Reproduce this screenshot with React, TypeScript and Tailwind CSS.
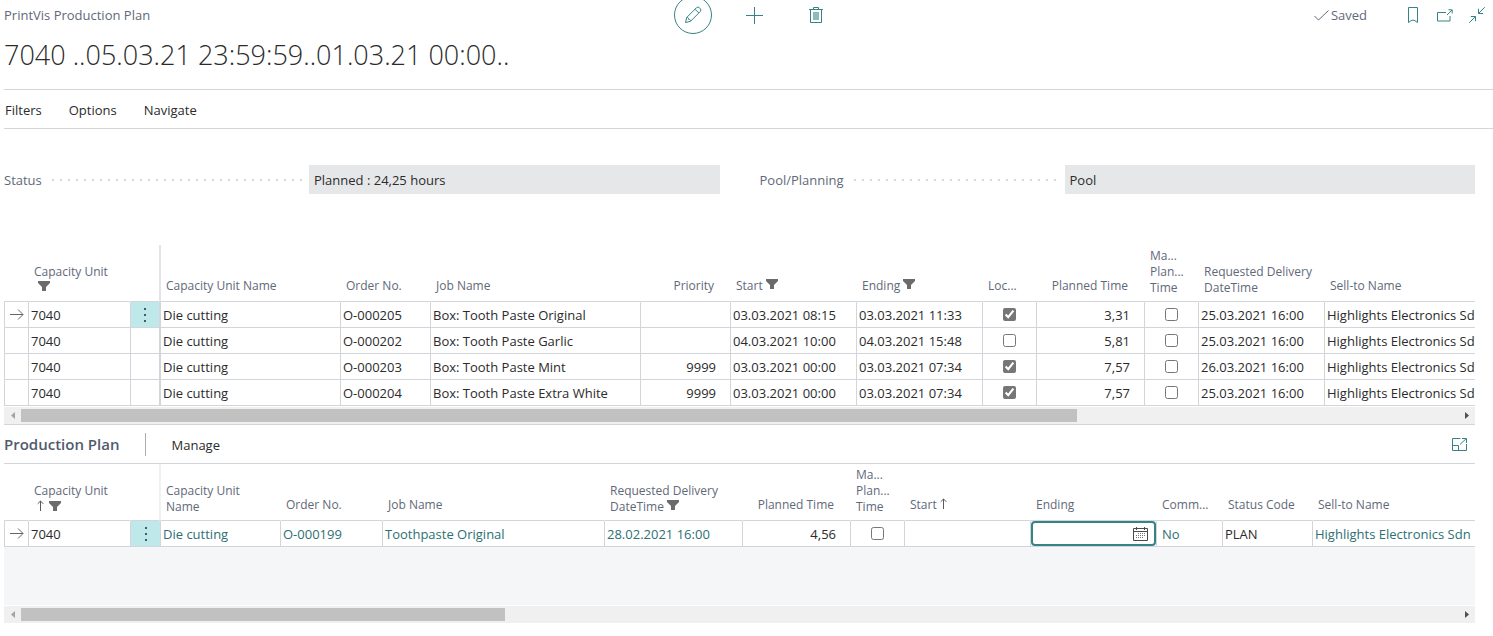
import type { ReactNode } from "react";

type Align = "left" | "right" | "center";

interface Column {
  label: ReactNode;
  lines?: boolean;
  align?: Align;
  width: string;
}

function FilterIcon() {
  return (
    <svg aria-hidden="true" className="inline-block h-[10px] w-3 align-[1px]" viewBox="0 0 12 10" fill="#6b6b6b">
      <path d="M0 0h12v2L8 6v4H4V6L0 2z" />
    </svg>
  );
}

function SortIcon() {
  return (
    <svg aria-hidden="true" className="inline-block h-[11px] w-[7px] align-baseline" viewBox="0 0 7 11" fill="none" stroke="#5a5a5a">
      <path d="M3.5 11V1M.7 3.8l2.8-2.8 2.8 2.8" />
    </svg>
  );
}

function RowArrow() {
  return (
    <svg aria-hidden="true" className="mx-auto h-[13px] w-[14px]" viewBox="0 0 14 13" fill="none" stroke="#666">
      <path d="M0 6.5h13M8 1.5l5 5-5 5" />
    </svg>
  );
}

function RowMenu() {
  return (
    <button type="button" aria-label="More options" className="flex h-[25px] w-full items-center justify-center bg-[#bee8ea]">
      <svg aria-hidden="true" className="h-[14px] w-[2px]" viewBox="0 0 2 14" fill="#3d5f63">
        <path d="M0 0h2v2H0zM0 6h2v2H0zM0 12h2v2H0z" />
      </svg>
    </button>
  );
}

function Tick({ label, checked = false }: { label: string; checked?: boolean }) {
  return <input type="checkbox" aria-label={label} defaultChecked={checked} className="mx-auto block h-[13px] w-[13px] accent-[#767676]" />;
}

function HeaderLabel({ column }: { column: Column }) {
  const align = column.align === "right" ? "pr-4 text-right" : "text-left";
  return <div className={`whitespace-nowrap pl-[5px] ${column.lines ? "pb-[5px]" : "pb-[7px]"} ${align}`}>{column.label}</div>;
}

const TH = "h-[57px] border-b border-b-[#d2d5d9] p-0 align-bottom text-[12px] font-normal leading-4 text-[#5f6979]";
const TD = "h-[26px] overflow-hidden whitespace-nowrap border-b border-l border-[#d2d5d9] py-0 pl-[2px] pr-0 text-left";
const TD_NUM = "h-[26px] overflow-hidden whitespace-nowrap border-b border-l border-[#d2d5d9] py-0 pl-[2px] pr-[14px] text-right";
const TD_FLUSH = "h-[26px] border-b border-l border-[#d2d5d9] p-0";

const maPlanTime = (
  <>
    Ma...
    <br />
    Plan...
    <br />
    Time
  </>
);

const planColumns: Column[] = [
  { label: "", width: "w-[24px]" },
  { label: <>Capacity Unit<br /><span className="pl-1"><FilterIcon /></span></>, lines: true, width: "w-[102px]" },
  { label: "", width: "w-[29px]" },
  { label: "Capacity Unit Name", width: "w-[181px]" },
  { label: "Order No.", width: "w-[90px]" },
  { label: "Job Name", width: "w-[210px]" },
  { label: "Priority", align: "right", width: "w-[90px]" },
  { label: <>Start <FilterIcon /></>, width: "w-[126px]" },
  { label: <>Ending <FilterIcon /></>, width: "w-[126px]" },
  { label: "Loc...", width: "w-[54px]" },
  { label: "Planned Time", align: "right", width: "w-[108px]" },
  { label: maPlanTime, lines: true, width: "w-[54px]" },
  { label: <>Requested Delivery<br />DateTime</>, lines: true, width: "w-[126px]" },
  { label: "Sell-to Name", width: "w-auto" },
];

const planRows = [
  { order: "O-000205", job: "Box: Tooth Paste Original", priority: "", start: "03.03.2021 08:15", end: "03.03.2021 11:33", locked: true, time: "3,31", delivery: "25.03.2021 16:00" },
  { order: "O-000202", job: "Box: Tooth Paste Garlic", priority: "", start: "04.03.2021 10:00", end: "04.03.2021 15:48", locked: false, time: "5,81", delivery: "25.03.2021 16:00" },
  { order: "O-000203", job: "Box: Tooth Paste Mint", priority: "9999", start: "03.03.2021 00:00", end: "03.03.2021 07:34", locked: true, time: "7,57", delivery: "26.03.2021 16:00" },
  { order: "O-000204", job: "Box: Tooth Paste Extra White", priority: "9999", start: "03.03.2021 00:00", end: "03.03.2021 07:34", locked: true, time: "7,57", delivery: "25.03.2021 16:00" },
];

const poolColumns: Column[] = [
  { label: "", width: "w-[24px]" },
  { label: <>Capacity Unit<br /><span className="inline-flex items-center gap-[5px] pl-[3px]"><SortIcon /><FilterIcon /></span></>, lines: true, width: "w-[102px]" },
  { label: "", width: "w-[30px]" },
  { label: <>Capacity Unit<br />Name</>, lines: true, width: "w-[120px]" },
  { label: "Order No.", width: "w-[102px]" },
  { label: "Job Name", width: "w-[222px]" },
  { label: <>Requested Delivery<br />DateTime <FilterIcon /></>, lines: true, width: "w-[138px]" },
  { label: "Planned Time", align: "right", width: "w-[108px]" },
  { label: maPlanTime, lines: true, width: "w-[54px]" },
  { label: <>Start <SortIcon /></>, width: "w-[126px]" },
  { label: "Ending", width: "w-[126px]" },
  { label: "Comm...", width: "w-[66px]" },
  { label: "Status Code", width: "w-[90px]" },
  { label: "Sell-to Name", width: "w-auto" },
];

function Columns({ columns }: { columns: Column[] }) {
  return (
    <colgroup>
      {columns.map((c, i) => (
        <col key={i} className={c.width} />
      ))}
    </colgroup>
  );
}

function PlanTable() {
  return (
    <table className="w-full table-fixed border-separate border-spacing-0">
      <Columns columns={planColumns} />
      <thead>
        <tr>
          {planColumns.map((c, i) => (
            <th key={i} scope="col" className={`${TH} border-l-[#e2e4e7] ${i === 3 ? "border-l-2" : i === 0 ? "" : "border-l border-l-transparent"}`}>
              <HeaderLabel column={c} />
            </th>
          ))}
        </tr>
      </thead>
      <tbody>
        {planRows.map((r, i) => (
          <tr key={r.order}>
            <td className={TD_FLUSH}>{i === 0 && <RowArrow />}</td>
            <td className={TD}>7040</td>
            <td className={TD_FLUSH}>{i === 0 && <RowMenu />}</td>
            <td className={`${TD} border-l-2`}>Die cutting</td>
            <td className={TD}>{r.order}</td>
            <td className={TD}>{r.job}</td>
            <td className={TD_NUM}>{r.priority}</td>
            <td className={TD}>{r.start}</td>
            <td className={TD}>{r.end}</td>
            <td className={TD_FLUSH}><Tick label={`Locked ${r.order}`} checked={r.locked} /></td>
            <td className={TD_NUM}>{r.time}</td>
            <td className={TD_FLUSH}><Tick label={`Manual planned time ${r.order}`} /></td>
            <td className={TD}>{r.delivery}</td>
            <td className={TD}>Highlights Electronics Sdn</td>
          </tr>
        ))}
      </tbody>
    </table>
  );
}

function CellLink({ children }: { children: ReactNode }) {
  return <a href="#" className="text-[#2c7073]">{children}</a>;
}

function PoolTable() {
  return (
    <table className="w-full table-fixed border-separate border-spacing-0">
      <Columns columns={poolColumns} />
      <thead>
        <tr>
          {poolColumns.map((c, i) => (
            <th
              key={i}
              scope="col"
              className={`${TH} ${i === 3 ? "border-l border-l-[#f0f1f3]" : i === 0 ? "" : "border-l border-l-transparent"} ${i === 2 ? "border-r border-r-[#f0f1f3]" : ""}`}
            >
              <HeaderLabel column={c} />
            </th>
          ))}
        </tr>
      </thead>
      <tbody className="bg-white">
        <tr>
          <td className={TD_FLUSH}><RowArrow /></td>
          <td className={TD}>7040</td>
          <td className={TD_FLUSH}><RowMenu /></td>
          <td className={TD}><CellLink>Die cutting</CellLink></td>
          <td className={TD}><CellLink>O-000199</CellLink></td>
          <td className={TD}><CellLink>Toothpaste Original</CellLink></td>
          <td className={TD}><CellLink>28.02.2021 16:00</CellLink></td>
          <td className={TD_NUM}>4,56</td>
          <td className={TD_FLUSH}><Tick label="Manual planned time O-000199" /></td>
          <td className={TD} />
          <td className={TD_FLUSH}>
            <div className="flex h-[25px] items-center rounded-[4px] border-2 border-[#358387] pr-1.5">
              <input type="text" aria-label="Ending" className="min-w-0 flex-1 bg-transparent px-1 outline-none" />
              <button type="button" aria-label="Pick a date">
                <svg aria-hidden="true" className="h-[14px] w-[15px]" viewBox="0 0 15 14" fill="none" stroke="#4a4a4a">
                  <path d="M.5 1.5h14v12H.5zM.5 4.5h14M3.5 0v3M11.5 0v3" />
                  <path d="M5 6.5h8M3 8.5h10M3 10.5h8" stroke="#777" strokeDasharray="1 1" />
                </svg>
              </button>
            </div>
          </td>
          <td className={`${TD} pl-[5px]`}><CellLink>No</CellLink></td>
          <td className={TD}>PLAN</td>
          <td className={TD}><CellLink>Highlights Electronics Sdn</CellLink></td>
        </tr>
      </tbody>
    </table>
  );
}

function ScrollBar({ thumb }: { thumb: string }) {
  return (
    <div className="flex h-[17px] items-center bg-[#f0f0f0]">
      <button type="button" aria-label="Scroll left" className="flex h-full w-[17px] shrink-0 items-center justify-center">
        <svg aria-hidden="true" className="h-[7px] w-1" viewBox="0 0 4 7" fill="#a3a3a3"><path d="M4 0v7L0 3.5z" /></svg>
      </button>
      <div className="flex-1">
        <div className={`h-[13px] bg-[#c1c1c1] ${thumb}`} />
      </div>
      <button type="button" aria-label="Scroll right" className="flex h-full w-[17px] shrink-0 items-center justify-center">
        <svg aria-hidden="true" className="h-[7px] w-1" viewBox="0 0 4 7" fill="#505050"><path d="M0 0v7l4-3.5z" /></svg>
      </button>
    </div>
  );
}

function Field({ id, label, value }: { id: string; label: string; value: string }) {
  return (
    <div className="flex items-center">
      <div className="flex w-[305px] shrink-0 items-center gap-[10px] pr-[6px]">
        <label htmlFor={id} className="text-[#5f6979]">{label}</label>
        <div className="h-[2px] flex-1 bg-[linear-gradient(to_right,#d6d8da_2px,transparent_2px)] bg-[length:8px_2px] bg-repeat-x" />
      </div>
      <input id={id} readOnly value={value} className="h-[29px] min-w-0 flex-1 bg-[#e6e7e9] px-[5px] text-[#2b2b2b] outline-none" />
    </div>
  );
}

function TopBar() {
  return (
    <header className="grid h-[30px] grid-cols-[1fr_auto_1fr] grid-rows-[30px] items-center">
      <div className="text-[#5f6979]">PrintVis Production Plan</div>
      <div className="flex items-center text-[#358387]">
        <button type="button" aria-label="Edit" className="flex h-[38px] w-[38px] items-center justify-center rounded-full border border-current">
          <svg aria-hidden="true" className="h-[18px] w-[18px]" viewBox="0 0 18 18" fill="none" stroke="currentColor">
            <path d="M1.500 16.500l1.200-5L12.400 1.800a2.200 2.200 0 0 1 3.100 0l.7.7a2.200 2.200 0 0 1 0 3.100L6.500 15.300zM2.700 11.500c1.300-.1 2 .5 1.900 1.900 1.300-.1 2 .5 1.900 1.900M11 3.200L14.800 7" />
          </svg>
        </button>
        <button type="button" aria-label="New" className="ml-[34px] flex h-[17px] w-[17px] items-center justify-center">
          <svg aria-hidden="true" className="h-[17px] w-[17px]" viewBox="0 0 17 17" fill="none" stroke="currentColor"><path d="M8.500 0v17M0 8.500h17" /></svg>
        </button>
        <button type="button" aria-label="Delete" className="ml-[46px] flex h-4 w-[14px] items-center justify-center">
          <svg aria-hidden="true" className="h-4 w-[14px]" viewBox="0 0 14 16" fill="none" stroke="currentColor">
            <path d="M0 2.500h14M4.500 2.500v-2h5v2M1.500 2.500v13h11v-13" />
            <path d="M4 5h6v8H4z" fill="currentColor" stroke="none" opacity=".55" />
          </svg>
        </button>
      </div>
      <div className="flex items-center justify-end pr-2 text-[#358387]">
        <span className="flex items-center gap-0.5 text-[#5f6979]">
          <svg aria-hidden="true" className="h-[11px] w-[15px]" viewBox="0 0 15 11" fill="none" stroke="currentColor"><path d="M.5 6l4 4L14.500.5" /></svg>
          Saved
        </span>
        <button type="button" aria-label="Bookmark" className="ml-10">
          <svg aria-hidden="true" className="h-4 w-3" viewBox="0 0 12 16" fill="none" stroke="currentColor"><path d="M1.500 .5h9v15L8 13.700c-1.200-.7-2.800-.7-4 0l-2.500 1.800z" /></svg>
        </button>
        <button type="button" aria-label="Open in new window" className="ml-[18px]">
          <svg aria-hidden="true" className="h-[13px] w-4" viewBox="0 0 16 13" fill="none" stroke="currentColor"><path d="M9 3.500H.5v8.500h12.500V7M10 6l5-5M11.500.8h3.700v3.700" /></svg>
        </button>
        <button type="button" aria-label="Collapse" className="ml-4">
          <svg aria-hidden="true" className="h-4 w-4" viewBox="0 0 16 16" fill="none" stroke="currentColor"><path d="M15.800.2L9.500 6.500M9.500 1.800v4.700h4.700M.2 15.800l6.300-6.300M1.800 9.500h4.700v4.700" /></svg>
        </button>
      </div>
    </header>
  );
}

export default function App() {
  return (
    <div className="bg-white pl-1 font-['Open_Sans',sans-serif] text-[13px] leading-5 text-[#2b2b2b]">
      <TopBar />
      <h1 className="h-[59px] pt-[5px] text-[27px] font-light leading-10">7040 ..05.03.21 23:59:59..01.03.21 00:00..</h1>
      <nav className="flex h-10 items-center gap-[27px] border-y border-[#d2d5d9] pl-px pt-px">
        <button type="button">Filters</button>
        <button type="button">Options</button>
        <button type="button">Navigate</button>
      </nav>
      <main className="pr-[18px]">
        <section className="grid grid-cols-2 gap-x-10 pb-[51px] pt-9">
          <Field id="status" label="Status" value="Planned : 24,25 hours" />
          <Field id="pool" label="Pool/Planning" value="Pool" />
        </section>
        <section className="border-b border-[#d2d5d9]">
          <PlanTable />
          <div className="pt-px">
            <ScrollBar thumb="w-[73.5%]" />
          </div>
        </section>
        <section>
          <div className="flex h-[39px] items-center border-b border-[#d2d5d9]">
            <h2 className="text-[15px] font-semibold text-[#505c6d]">Production Plan</h2>
            <div className="ml-[25px] h-[23px] w-px bg-[#a9adb3]" />
            <button type="button" className="ml-[26px] pt-px">Manage</button>
            <button type="button" aria-label="Expand" className="ml-auto mr-2 text-[#358387]">
              <svg aria-hidden="true" className="h-[13px] w-[15px]" viewBox="0 0 15 13" fill="none" stroke="currentColor">
                <path d="M8.500.5h-8v12h14V6M.5 7.500h6v5M8 6.500L14 .8M10 .5h4.500V5" />
              </svg>
            </button>
          </div>
          <PoolTable />
          <div className="h-[58px] bg-[#f5f6f8]" />
          <div className="pt-px">
            <ScrollBar thumb="w-[33.7%]" />
          </div>
        </section>
      </main>
    </div>
  );
}
